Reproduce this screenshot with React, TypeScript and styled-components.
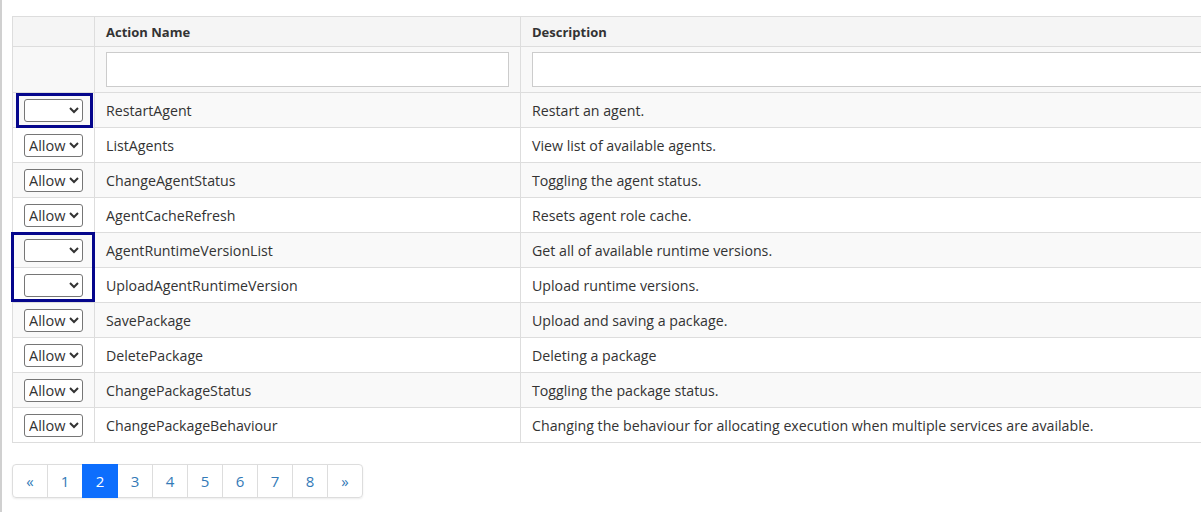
import React from "react";
import styled, { createGlobalStyle } from "styled-components";

const Global = createGlobalStyle`
  html, body { margin: 0; padding: 0; background: #fff; }
  body { font-family: "Open Sans", "Liberation Sans", sans-serif; color: #333; overflow: hidden; }
`;

const Page = styled.div`
  border-left: 2px solid #d0d0d0;
  min-height: 512px;
  box-sizing: border-box;
  padding: 16px 0 0 10px;
  width: 1201px;
  overflow: hidden;
`;

const TableWrap = styled.div`
  position: relative;
  width: 1300px;
`;

const Table = styled.table`
  border-collapse: collapse;
  width: 1300px;
  table-layout: fixed;
  font-size: 14.2px;
`;

const HeadCell = styled.th`
  border: 1px solid #dddddd;
  background: #f5f5f5;
  height: 30px;
  padding: 0 11px;
  text-align: left;
  font-size: 13px;
  font-weight: 700;
  color: #333;
  box-sizing: border-box;
`;

const FilterCell = styled.td`
  border: 1px solid #dddddd;
  background: #f8f8f8;
  height: 46px;
  padding: 0 11px;
  box-sizing: border-box;
`;

const FilterInput = styled.input`
  display: block;
  width: 100%;
  height: 35px;
  box-sizing: border-box;
  border: 1px solid #cccccc;
  background: #fff;
  outline: none;
`;

const Row = styled.tr<{ $odd: boolean }>`
  background: ${(p) => (p.$odd ? "#f9f9f9" : "#ffffff")};
`;

const Cell = styled.td`
  border: 1px solid #dddddd;
  height: 35px;
  padding: 0 11px;
  box-sizing: border-box;
  color: #333;
  white-space: nowrap;
`;

const Select = styled.select`
  width: 59px;
  height: 23px;
  font-family: "Open Sans", "Liberation Sans", sans-serif;
  font-size: 14.5px;
  color: #333;
  border: 1px solid #767676;
  border-radius: 3px;
  background: #fff;
  padding: 0;
  display: block;
`;

const Highlight = styled.div<{ $l: number; $t: number; $w: number; $h: number }>`
  position: absolute;
  left: ${(p) => p.$l}px;
  top: ${(p) => p.$t}px;
  width: ${(p) => p.$w}px;
  height: ${(p) => p.$h}px;
  border: 3px solid #05068c;
  box-sizing: border-box;
  pointer-events: none;
`;

const Pager = styled.ul`
  display: flex;
  list-style: none;
  margin: 21px 0 0 0;
  padding: 0;
  width: max-content;
  border-radius: 4px;
  box-shadow: 0 1px 2px rgba(0, 0, 0, 0.08);
`;

const PageItem = styled.li<{ $active?: boolean }>`
  width: 36px;
  height: 34px;
  box-sizing: border-box;
  display: flex;
  align-items: center;
  justify-content: center;
  border: 1px solid #dddddd;
  margin-left: -1px;
  font-size: 15px;
  color: ${(p) => (p.$active ? "#fff" : "#337ab7")};
  background: ${(p) => (p.$active ? "#0d6efd" : "#fff")};
  border-color: ${(p) => (p.$active ? "#0d6efd" : "#dddddd")};
  position: relative;
  z-index: ${(p) => (p.$active ? 1 : 0)};
  &:first-child { margin-left: 0; border-radius: 4px 0 0 4px; }
  &:last-child { border-radius: 0 4px 4px 0; }
`;

const rows: { name: string; desc: string; value: string }[] = [
  { name: "RestartAgent", desc: "Restart an agent.", value: "" },
  { name: "ListAgents", desc: "View list of available agents.", value: "Allow" },
  { name: "ChangeAgentStatus", desc: "Toggling the agent status.", value: "Allow" },
  { name: "AgentCacheRefresh", desc: "Resets agent role cache.", value: "Allow" },
  { name: "AgentRuntimeVersionList", desc: "Get all of available runtime versions.", value: "" },
  { name: "UploadAgentRuntimeVersion", desc: "Upload runtime versions.", value: "" },
  { name: "SavePackage", desc: "Upload and saving a package.", value: "Allow" },
  { name: "DeletePackage", desc: "Deleting a package", value: "Allow" },
  { name: "ChangePackageStatus", desc: "Toggling the package status.", value: "Allow" },
  {
    name: "ChangePackageBehaviour",
    desc: "Changing the behaviour for allocating execution when multiple services are available.",
    value: "Allow",
  },
];

const pages = ["«", "1", "2", "3", "4", "5", "6", "7", "8", "»"];

export default function App() {
  return (
    <>
      <Global />
      <Page>
        <TableWrap>
          <Table>
            <colgroup>
              <col style={{ width: 82 }} />
              <col style={{ width: 426 }} />
              <col />
            </colgroup>
            <thead>
              <tr>
                <HeadCell />
                <HeadCell>Action Name</HeadCell>
                <HeadCell>Description</HeadCell>
              </tr>
              <tr>
                <FilterCell />
                <FilterCell>
                  <FilterInput />
                </FilterCell>
                <FilterCell>
                  <FilterInput />
                </FilterCell>
              </tr>
            </thead>
            <tbody>
              {rows.map((r, i) => (
                <Row key={r.name} $odd={i % 2 === 0}>
                  <Cell>
                    <Select defaultValue={r.value}>
                      <option value=""></option>
                      <option value="Allow">Allow</option>
                      <option value="Deny">Deny</option>
                    </Select>
                  </Cell>
                  <Cell>{r.name}</Cell>
                  <Cell>{r.desc}</Cell>
                </Row>
              ))}
            </tbody>
          </Table>
          <Highlight $l={4} $t={77} $w={77} $h={35} />
          <Highlight $l={-1} $t={216} $w={84} $h={70} />
        </TableWrap>
        <Pager>
          {pages.map((p) => (
            <PageItem key={p} $active={p === "2"}>
              {p}
            </PageItem>
          ))}
        </Pager>
      </Page>
    </>
  );
}
